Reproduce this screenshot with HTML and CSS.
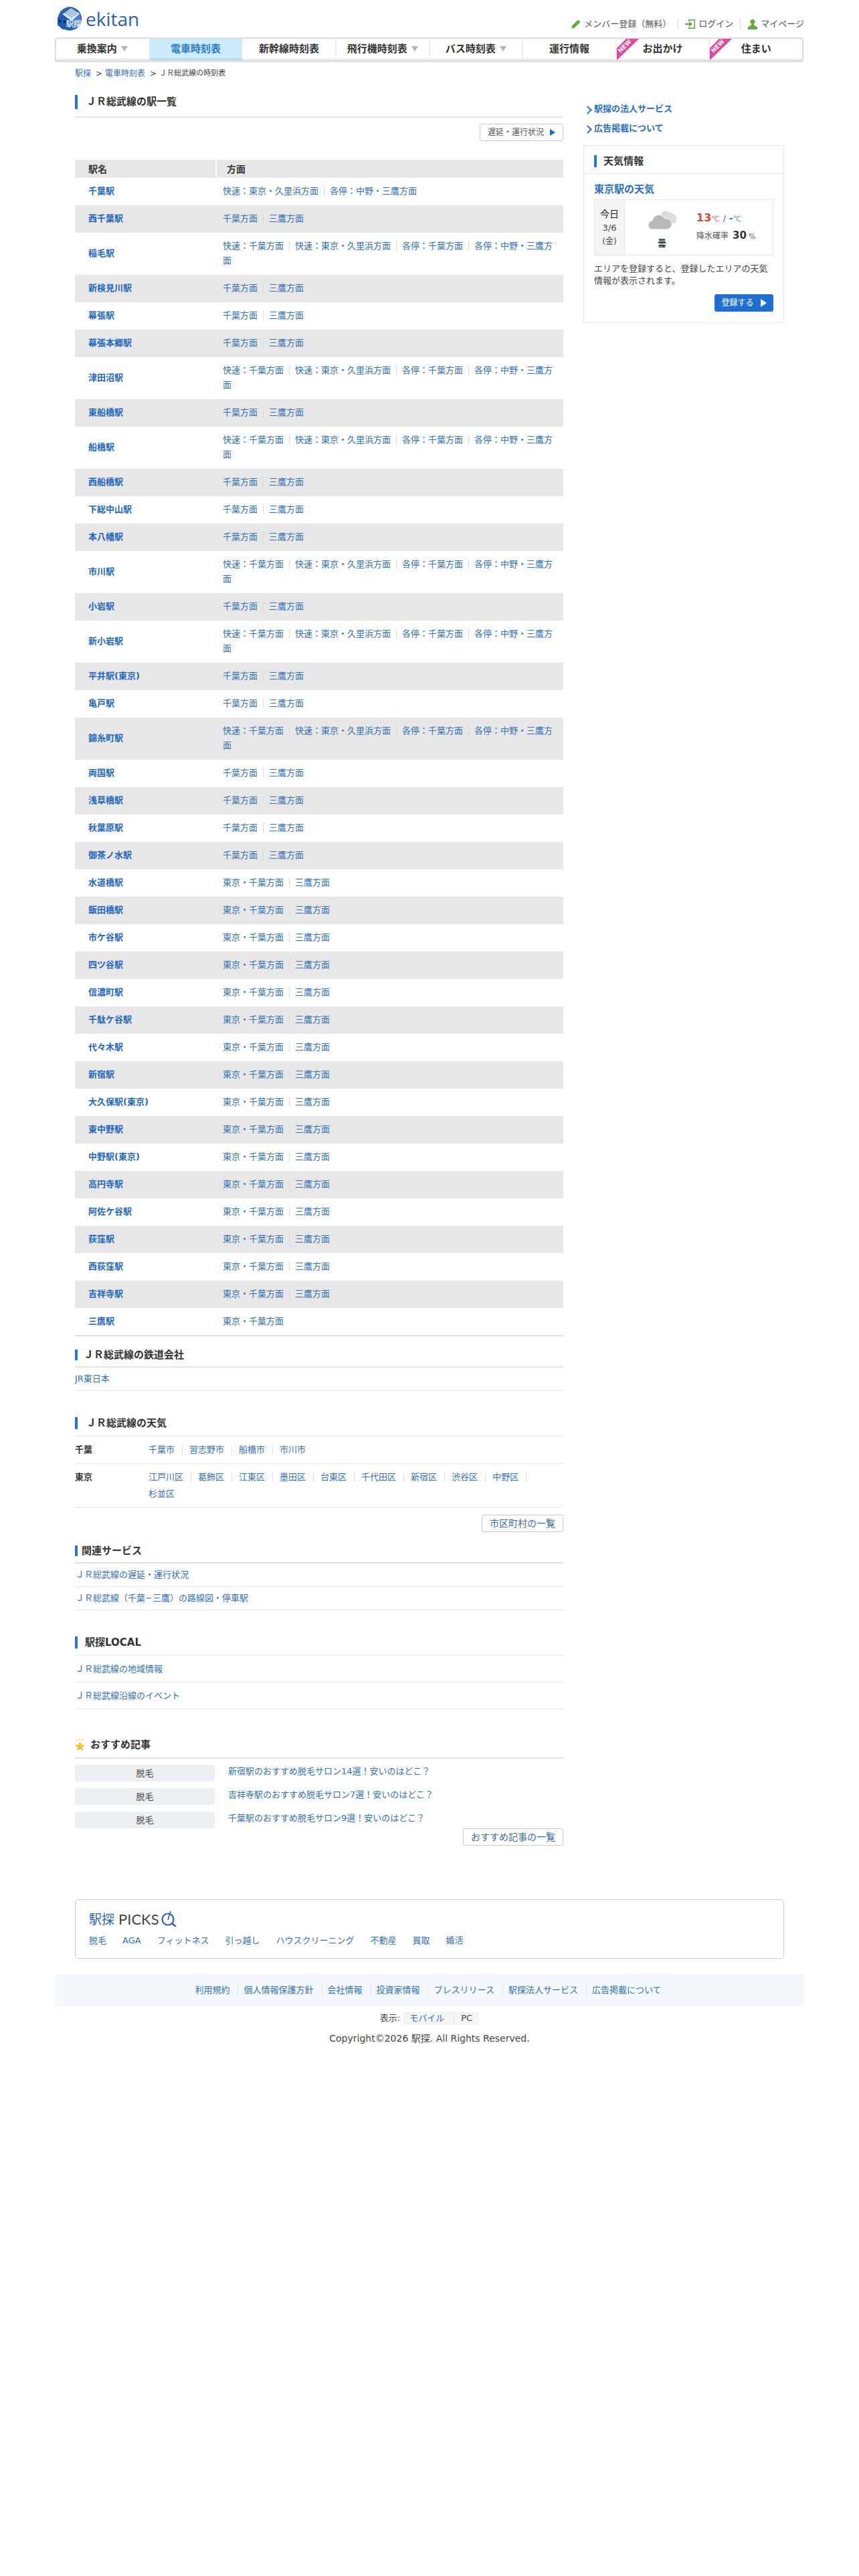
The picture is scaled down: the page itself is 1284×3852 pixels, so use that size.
FILE: index.html
```html
<!DOCTYPE html>
<html lang="ja">
<head>
<meta charset="utf-8">
<title>ＪＲ総武線の時刻表 - 駅探</title>
<link rel="stylesheet" href="styles.css">
</head>
<body>
<div class="wrap">
  <header class="top">
    <a class="logo" href="#">
      <svg class="logo-mark" viewBox="0 0 42 40" width="39" height="38">
        <circle cx="22" cy="20" r="19" fill="#2d62ad"/>
        <polygon points="10,13 24,3 38,12 25,24" fill="#d8e6f5"/>
        <path d="M14 12l13-8M17 14l13-8M20 16l13-8M23 18l11-7" stroke="#5f8cc6" stroke-width="1.2"/>
        <polygon points="2,18 10,13 25,24 27,38 10,37 2,30" fill="#1f5bb0"/>
        <polygon points="25,24 38,12 40,22 27,38" fill="#4c82c8"/>
        <circle cx="6" cy="24" r="2.4" fill="#0d2f63"/><circle cx="14" cy="25" r="2.4" fill="#0d2f63"/>
        <text x="16" y="33" class="logo-kanji">駅探</text>
      </svg>
      <span class="logo-text">ekitan</span>
    </a>
    <nav class="toplinks">
      <a href="#"><svg viewBox="0 0 16 16" width="16" height="16"><path d="M1 15l1.500-5L11 1.500l3.500 3.500L6 13.500z" fill="#62a83b"/></svg>メンバー登録（無料）</a>
      <span class="toplink-sep"></span>
      <a href="#"><svg viewBox="0 0 16 16" width="16" height="16"><path d="M5 1h10v14H5v-3h1.500v1.500h7v-11h-7V4H5z" fill="#62a83b"/><path d="M0 7h6V4l5 4-5 4V9H0z" fill="#62a83b"/></svg>ログイン</a>
      <span class="toplink-sep"></span>
      <a href="#"><svg viewBox="0 0 16 16" width="16" height="16"><circle cx="8" cy="4.500" r="3.500" fill="#62a83b"/><path d="M6 8h4v1.500l5 3V16H1v-3.500l5-3z" fill="#62a83b"/></svg>マイページ</a>
    </nav>
  </header>

  <nav class="gnav">
    <a href="#" class="gnav-item">乗換案内<i class="caret"></i></a>
    <a href="#" class="gnav-item is-active">電車時刻表</a>
    <a href="#" class="gnav-item">新幹線時刻表</a>
    <a href="#" class="gnav-item">飛行機時刻表<i class="caret"></i></a>
    <a href="#" class="gnav-item">バス時刻表<i class="caret"></i></a>
    <a href="#" class="gnav-item">運行情報</a>
    <a href="#" class="gnav-item">
      <svg class="ribbon" viewBox="0 0 33 33" width="33" height="33"><polygon points="14,0 33,0 0,32 0,14" fill="#e0479e"/><text x="0" y="0" class="ribbon-text" transform="translate(5.500 21.500) rotate(-45)">NEW</text></svg>
      お出かけ</a>
    <a href="#" class="gnav-item">
      <svg class="ribbon" viewBox="0 0 33 33" width="33" height="33"><polygon points="14,0 33,0 0,32 0,14" fill="#e0479e"/><text x="0" y="0" class="ribbon-text" transform="translate(5.500 21.500) rotate(-45)">NEW</text></svg>
      住まい</a>
  </nav>

  <div class="crumbs">
    <a href="#">駅探</a><span class="crumb-gt">&gt;</span><a href="#">電車時刻表</a><span class="crumb-gt">&gt;</span><span class="crumb-now">ＪＲ総武線の時刻表</span>
  </div>

  <div class="columns">
    <main class="main">
      <h2 class="sec sec-first"><span class="sec-t sec-t17">ＪＲ総武線の駅一覧</span></h2>
      <div class="btn-row btn-row-first"><a href="#" class="btn btn-small">遅延・運行状況<i class="tri"></i></a></div>

      <table class="stations">
        <thead><tr><th class="th-name">駅名</th><th class="th-dir">方面</th></tr></thead>
        <tbody>
          <tr><td class="name"><a href="#">千葉駅</a></td><td class="dir"><a href="#">快速：東京・久里浜方面</a><span class="sep"></span><a href="#">各停：中野・三鷹方面</a></td></tr>
          <tr><td class="name"><a href="#">西千葉駅</a></td><td class="dir"><a href="#">千葉方面</a><span class="sep"></span><a href="#">三鷹方面</a></td></tr>
          <tr><td class="name"><a href="#">稲毛駅</a></td><td class="dir"><a href="#">快速：千葉方面</a><span class="sep"></span><a href="#">快速：東京・久里浜方面</a><span class="sep"></span><a href="#">各停：千葉方面</a><span class="sep"></span><a href="#">各停：中野・三鷹方面</a></td></tr>
          <tr><td class="name"><a href="#">新検見川駅</a></td><td class="dir"><a href="#">千葉方面</a><span class="sep"></span><a href="#">三鷹方面</a></td></tr>
          <tr><td class="name"><a href="#">幕張駅</a></td><td class="dir"><a href="#">千葉方面</a><span class="sep"></span><a href="#">三鷹方面</a></td></tr>
          <tr><td class="name"><a href="#">幕張本郷駅</a></td><td class="dir"><a href="#">千葉方面</a><span class="sep"></span><a href="#">三鷹方面</a></td></tr>
          <tr><td class="name"><a href="#">津田沼駅</a></td><td class="dir"><a href="#">快速：千葉方面</a><span class="sep"></span><a href="#">快速：東京・久里浜方面</a><span class="sep"></span><a href="#">各停：千葉方面</a><span class="sep"></span><a href="#">各停：中野・三鷹方面</a></td></tr>
          <tr><td class="name"><a href="#">東船橋駅</a></td><td class="dir"><a href="#">千葉方面</a><span class="sep"></span><a href="#">三鷹方面</a></td></tr>
          <tr><td class="name"><a href="#">船橋駅</a></td><td class="dir"><a href="#">快速：千葉方面</a><span class="sep"></span><a href="#">快速：東京・久里浜方面</a><span class="sep"></span><a href="#">各停：千葉方面</a><span class="sep"></span><a href="#">各停：中野・三鷹方面</a></td></tr>
          <tr><td class="name"><a href="#">西船橋駅</a></td><td class="dir"><a href="#">千葉方面</a><span class="sep"></span><a href="#">三鷹方面</a></td></tr>
          <tr><td class="name"><a href="#">下総中山駅</a></td><td class="dir"><a href="#">千葉方面</a><span class="sep"></span><a href="#">三鷹方面</a></td></tr>
          <tr><td class="name"><a href="#">本八幡駅</a></td><td class="dir"><a href="#">千葉方面</a><span class="sep"></span><a href="#">三鷹方面</a></td></tr>
          <tr><td class="name"><a href="#">市川駅</a></td><td class="dir"><a href="#">快速：千葉方面</a><span class="sep"></span><a href="#">快速：東京・久里浜方面</a><span class="sep"></span><a href="#">各停：千葉方面</a><span class="sep"></span><a href="#">各停：中野・三鷹方面</a></td></tr>
          <tr><td class="name"><a href="#">小岩駅</a></td><td class="dir"><a href="#">千葉方面</a><span class="sep"></span><a href="#">三鷹方面</a></td></tr>
          <tr><td class="name"><a href="#">新小岩駅</a></td><td class="dir"><a href="#">快速：千葉方面</a><span class="sep"></span><a href="#">快速：東京・久里浜方面</a><span class="sep"></span><a href="#">各停：千葉方面</a><span class="sep"></span><a href="#">各停：中野・三鷹方面</a></td></tr>
          <tr><td class="name"><a href="#">平井駅(東京)</a></td><td class="dir"><a href="#">千葉方面</a><span class="sep"></span><a href="#">三鷹方面</a></td></tr>
          <tr><td class="name"><a href="#">亀戸駅</a></td><td class="dir"><a href="#">千葉方面</a><span class="sep"></span><a href="#">三鷹方面</a></td></tr>
          <tr><td class="name"><a href="#">錦糸町駅</a></td><td class="dir"><a href="#">快速：千葉方面</a><span class="sep"></span><a href="#">快速：東京・久里浜方面</a><span class="sep"></span><a href="#">各停：千葉方面</a><span class="sep"></span><a href="#">各停：中野・三鷹方面</a></td></tr>
          <tr><td class="name"><a href="#">両国駅</a></td><td class="dir"><a href="#">千葉方面</a><span class="sep"></span><a href="#">三鷹方面</a></td></tr>
          <tr><td class="name"><a href="#">浅草橋駅</a></td><td class="dir"><a href="#">千葉方面</a><span class="sep"></span><a href="#">三鷹方面</a></td></tr>
          <tr><td class="name"><a href="#">秋葉原駅</a></td><td class="dir"><a href="#">千葉方面</a><span class="sep"></span><a href="#">三鷹方面</a></td></tr>
          <tr><td class="name"><a href="#">御茶ノ水駅</a></td><td class="dir"><a href="#">千葉方面</a><span class="sep"></span><a href="#">三鷹方面</a></td></tr>
          <tr><td class="name"><a href="#">水道橋駅</a></td><td class="dir"><a href="#">東京・千葉方面</a><span class="sep"></span><a href="#">三鷹方面</a></td></tr>
          <tr><td class="name"><a href="#">飯田橋駅</a></td><td class="dir"><a href="#">東京・千葉方面</a><span class="sep"></span><a href="#">三鷹方面</a></td></tr>
          <tr><td class="name"><a href="#">市ケ谷駅</a></td><td class="dir"><a href="#">東京・千葉方面</a><span class="sep"></span><a href="#">三鷹方面</a></td></tr>
          <tr><td class="name"><a href="#">四ツ谷駅</a></td><td class="dir"><a href="#">東京・千葉方面</a><span class="sep"></span><a href="#">三鷹方面</a></td></tr>
          <tr><td class="name"><a href="#">信濃町駅</a></td><td class="dir"><a href="#">東京・千葉方面</a><span class="sep"></span><a href="#">三鷹方面</a></td></tr>
          <tr><td class="name"><a href="#">千駄ケ谷駅</a></td><td class="dir"><a href="#">東京・千葉方面</a><span class="sep"></span><a href="#">三鷹方面</a></td></tr>
          <tr><td class="name"><a href="#">代々木駅</a></td><td class="dir"><a href="#">東京・千葉方面</a><span class="sep"></span><a href="#">三鷹方面</a></td></tr>
          <tr><td class="name"><a href="#">新宿駅</a></td><td class="dir"><a href="#">東京・千葉方面</a><span class="sep"></span><a href="#">三鷹方面</a></td></tr>
          <tr><td class="name"><a href="#">大久保駅(東京)</a></td><td class="dir"><a href="#">東京・千葉方面</a><span class="sep"></span><a href="#">三鷹方面</a></td></tr>
          <tr><td class="name"><a href="#">東中野駅</a></td><td class="dir"><a href="#">東京・千葉方面</a><span class="sep"></span><a href="#">三鷹方面</a></td></tr>
          <tr><td class="name"><a href="#">中野駅(東京)</a></td><td class="dir"><a href="#">東京・千葉方面</a><span class="sep"></span><a href="#">三鷹方面</a></td></tr>
          <tr><td class="name"><a href="#">高円寺駅</a></td><td class="dir"><a href="#">東京・千葉方面</a><span class="sep"></span><a href="#">三鷹方面</a></td></tr>
          <tr><td class="name"><a href="#">阿佐ケ谷駅</a></td><td class="dir"><a href="#">東京・千葉方面</a><span class="sep"></span><a href="#">三鷹方面</a></td></tr>
          <tr><td class="name"><a href="#">荻窪駅</a></td><td class="dir"><a href="#">東京・千葉方面</a><span class="sep"></span><a href="#">三鷹方面</a></td></tr>
          <tr><td class="name"><a href="#">西荻窪駅</a></td><td class="dir"><a href="#">東京・千葉方面</a><span class="sep"></span><a href="#">三鷹方面</a></td></tr>
          <tr><td class="name"><a href="#">吉祥寺駅</a></td><td class="dir"><a href="#">東京・千葉方面</a><span class="sep"></span><a href="#">三鷹方面</a></td></tr>
          <tr><td class="name"><a href="#">三鷹駅</a></td><td class="dir"><a href="#">東京・千葉方面</a></td></tr>
        </tbody>
      </table>

      <section class="block-company">
        <h2 class="sec sec-thick sec-16"><span class="sec-t sec-t9">ＪＲ総武線の鉄道会社</span></h2>
        <ul class="rows"><li><a href="#">JR東日本</a></li></ul>
      </section>

      <section class="block-weather">
        <h2 class="sec sec-thin"><span class="sec-t sec-t13">ＪＲ総武線の天気</span></h2>
        <dl class="pref">
          <dt>千葉</dt>
          <dd><a href="#">千葉市</a><a href="#">習志野市</a><a href="#">船橋市</a><a href="#">市川市</a></dd>
        </dl>
        <dl class="pref">
          <dt>東京</dt>
          <dd><a href="#">江戸川区</a><a href="#">葛飾区</a><a href="#">江東区</a><a href="#">墨田区</a><a href="#">台東区</a><a href="#">千代田区</a><a href="#">新宿区</a><a href="#">渋谷区</a><a href="#">中野区</a><a href="#">杉並区</a></dd>
        </dl>
        <div class="btn-row btn-row-city"><a href="#" class="btn">市区町村の一覧</a></div>
      </section>

      <section class="block-related">
        <h2 class="sec sec-thick sec-16"><span class="sec-t sec-t6">関連サービス</span></h2>
        <ul class="rows rows-indent"><li><a href="#">ＪＲ総武線の遅延・運行状況</a></li><li><a href="#">ＪＲ総武線（千葉−三鷹）の路線図・停車駅</a></li></ul>
      </section>

      <section class="block-local">
        <h2 class="sec sec-thin"><span class="sec-t sec-t11">駅探LOCAL</span></h2>
        <ul class="rows rows-indent rows-tall"><li><a href="#">ＪＲ総武線の地域情報</a></li><li><a href="#">ＪＲ総武線沿線のイベント</a></li></ul>
      </section>

      <section class="block-reco">
        <h2 class="sec sec-thick sec-star">
          <svg class="star" viewBox="0 0 15 18" width="15" height="18"><polygon points="7.500,4 9.700,9 15,9.600 11,13 12.200,18 7.500,15.500 2.800,18 4,13 0,9.600 5.300,9" fill="#f6c42b"/><path d="M7.500 0v2.500M3 1.500l1 2M12 1.500l-1 2" stroke="#f6c42b"/></svg>
          <span class="sec-t sec-tstar">おすすめ記事</span>
        </h2>
        <ul class="reco">
          <li><span class="reco-tag">脱毛</span><a href="#">新宿駅のおすすめ脱毛サロン14選！安いのはどこ？</a></li>
          <li><span class="reco-tag">脱毛</span><a href="#">吉祥寺駅のおすすめ脱毛サロン7選！安いのはどこ？</a></li>
          <li><span class="reco-tag">脱毛</span><a href="#">千葉駅のおすすめ脱毛サロン9選！安いのはどこ？</a></li>
        </ul>
        <div class="btn-row"><a href="#" class="btn">おすすめ記事の一覧</a></div>
      </section>
    </main>

    <aside class="side">
      <ul class="side-links">
        <li><a href="#">駅探の法人サービス</a></li>
        <li><a href="#">広告掲載について</a></li>
      </ul>
      <section class="wx">
        <h3 class="wx-h"><span>天気情報</span></h3>
        <div class="wx-body">
          <a href="#" class="wx-title">東京駅の天気</a>
          <div class="wx-card">
            <div class="wx-date"><b>今日</b><span>3/6</span><small>(金)</small></div>
            <div class="wx-icon">
              <svg viewBox="0 0 42 32" width="42" height="32"><path d="M20 8a6 6 0 0 1 11-2 6 6 0 0 1 7 3 5.500 5.500 0 0 1-1 11H24z" fill="#dedede" stroke="#cfcfcf"/><path d="M7 30a6.500 6.500 0 0 1-1-13 10 10 0 0 1 19-3 8 8 0 0 1 4 16z" fill="#b9b9b9" stroke="#fff"/></svg>
              <b>曇</b>
            </div>
            <div class="wx-data">
              <p class="wx-temp"><b class="hot">13</b><small class="hot-u">℃</small><span class="slash">/</span><b class="cold">-</b><small class="cold-u">℃</small></p>
              <p class="wx-rain">降水確率<b>30</b><small>%</small></p>
            </div>
          </div>
          <p class="wx-note">エリアを登録すると、登録したエリアの天気情報が表示されます。</p>
          <div class="wx-action"><a href="#" class="wx-btn">登録する<i class="tri tri-white"></i></a></div>
        </div>
      </section>
    </aside>
  </div>

  <section class="picks">
    <div class="picks-logo"><span class="picks-ja">駅探</span><span class="picks-en">PICKS</span>
      <svg viewBox="0 0 24 23" width="24" height="23"><circle cx="10" cy="12" r="8.500" fill="none" stroke="#2d62ad" stroke-width="2.200"/><path d="M16 18l6 5" stroke="#2d62ad" stroke-width="2.500"/><path d="M10 13l4-13" stroke="#2d62ad" stroke-width="1.600"/></svg>
    </div>
    <div class="picks-links"><a href="#">脱毛</a><a href="#">AGA</a><a href="#">フィットネス</a><a href="#">引っ越し</a><a href="#">ハウスクリーニング</a><a href="#">不動産</a><a href="#">買取</a><a href="#">婚活</a></div>
  </section>

  <footer>
    <nav class="foot-nav"><a href="#">利用規約</a><a href="#">個人情報保護方針</a><a href="#">会社情報</a><a href="#">投資家情報</a><a href="#">プレスリリース</a><a href="#">駅探法人サービス</a><a href="#">広告掲載について</a></nav>
    <div class="view-row"><span>表示:</span><span class="view-chip"><a href="#">モバイル</a><span class="view-pc">PC</span></span></div>
    <p class="copy">Copyright©2026 駅探. All Rights Reserved.</p>
  </footer>
</div>
</body>
</html>
```

FILE: styles.css
```css
* { box-sizing: border-box; }
html, body { margin: 0; padding: 0; }
body {
  background: #fff;
  color: #333;
  font-family: "DejaVu Sans", "Noto Sans CJK JP", sans-serif;
  font-size: 13px;
  line-height: 20px;
}
a { color: #3470b4; text-decoration: none; }
h2, h3, p, ul, dl, dd { margin: 0; padding: 0; }
ul { list-style: none; }

.wrap { width: 1120px; margin: 0 auto; }

/* header */
.top { height: 56px; display: flex; justify-content: space-between; position: relative; }
.logo { display: flex; align-items: center; height: 38px; margin: 9px 0 0 2px; }
.logo-mark { flex: none; }
.logo-kanji { font: bold 12px "Noto Sans CJK JP", sans-serif; fill: #dbe8f7; }
.logo-text { font: 28px/38px "Open Sans", sans-serif; color: #2d62ad; margin-left: 5px; }
.toplinks { display: flex; align-items: center; height: 20px; margin-top: 26px; font-size: 13px; }
.toplinks a { display: flex; align-items: center; color: #555; gap: 4px; }
.toplink-sep { width: 1px; height: 16px; background: #ddd; margin: 0 10px; }

/* global nav */
.gnav {
  display: flex;
  width: 1119px;
  height: 37px;
  border: 2px solid #ddd;
  border-bottom-width: 3px;
  border-radius: 4px;
  background: #fff;
}
.gnav-item {
  flex: 1 1 0;
  position: relative;
  display: flex;
  align-items: center;
  justify-content: center;
  color: #333;
  font-size: 15px;
  font-weight: bold;
  border-right: 2px solid #eee;
  border-bottom: 3px solid #f2f2f2;
}
.gnav-item:last-child { border-right: 0; }
.gnav-item.is-active { background: #cdeaf9; color: #2a78c8; border-bottom-color: #b3dcf2; }
.caret { width: 0; height: 0; margin-left: 6px; border: 5px solid transparent; border-top: 8px solid #b5b5b5; border-bottom: 0; }
.ribbon { position: absolute; left: 0; top: 0; overflow: visible; }
.ribbon-text { font: bold 9px "DejaVu Sans", sans-serif; fill: #fff; }

/* breadcrumb */
.crumbs { height: 34px; padding: 7px 0 0 30px; font-size: 12px; line-height: 20px; display: flex; }
.crumb-gt { margin: 0 4px 0 7px; color: #444; }
.crumb-now { font-size: 11px; color: #444; }

/* columns */
.columns { display: flex; gap: 30px; padding: 0 30px; }
.main { width: 730px; flex: none; }
.side { width: 300px; flex: none; }

/* headings */
.sec { display: flex; align-items: center; font-size: 15px; line-height: 18px; font-weight: bold; color: #333; }
.sec-t { display: block; border-left: 4px solid #2b73cd; }
.sec-first { padding: 15px 0 11px; border-bottom: 2px solid #e4e4e4; }
.sec-first .sec-t { line-height: 21px; }
.sec-thick { padding-bottom: 9px; border-bottom: 2px solid #e2e2e2; }
.sec-thin { padding-bottom: 10px; border-bottom: 1px solid #e6e6e6; }
.sec-16 .sec-t { line-height: 16px; }
.sec-t17 { padding-left: 13px; }
.sec-t9 { padding-left: 9px; }
.sec-t13 { padding-left: 13px; }
.sec-t6 { padding-left: 6px; }
.sec-t11 { padding-left: 11px; }
.sec-star { padding-bottom: 10px; }
.star { flex: none; }
.sec-tstar { border-left: 0; padding-left: 8px; }

/* buttons */
.btn-row { display: flex; justify-content: flex-end; }
.btn-row-first { margin-top: 9px; }
.btn-row-city { margin-top: 10px; }
.btn {
  display: flex;
  align-items: center;
  height: 26px;
  padding: 0 11px;
  border: 1px solid #c9c9c9;
  border-radius: 3px;
  background: #fff;
  font-size: 14px;
  color: #3a6ea8;
}
.btn-small { font-size: 12px; color: #555; padding: 0 11px; }
.tri { display: inline-block; width: 0; height: 0; margin-left: 9px; border: 5px solid transparent; border-left: 8px solid #2167c0; border-right: 0; }
.tri-white { border-left-color: #fff; border-top-width: 6px; border-bottom-width: 6px; border-left-width: 9px; margin-left: 10px; }

/* station table */
.stations { width: 730px; margin-top: 28px; border-collapse: separate; border-spacing: 0; table-layout: fixed; border-bottom: 1px solid #ccc; }
.stations th { height: 27px; padding: 0; background: #e7e7e7; text-align: left; font-size: 14px; color: #333; }
.stations .th-name { width: 210px; padding-left: 20px; }
.stations .th-dir { padding-left: 15px; border-left: 2px solid #fff; }
.stations td { padding: 9px 0 10px; line-height: 22px; vertical-align: middle; }
.stations tbody tr:nth-child(even) td { background: #e7e7e7; }
.stations .name { padding-left: 20px; font-weight: bold; }
.name a { color: #1f66bd; }
.stations .dir { padding-left: 11px; padding-right: 8px; }
.sep { display: inline-block; width: 1px; height: 15px; margin: 0 8px; background: #d9d9d9; vertical-align: -3px; }

/* simple rows */
.block-company { margin-top: 20px; }
.rows li { height: 35px; line-height: 34px; border-bottom: 1px solid #e6e6e6; }
.rows-indent li { padding-left: 1px; }
.rows-tall li { height: 40px; line-height: 39px; }

/* weather */
.block-weather { margin-top: 39px; }
.pref { display: flex; border-bottom: 1px solid #e6e6e6; padding: 7px 0 8px; line-height: 25px; }
.pref dt { width: 110px; flex: none; font-weight: bold; color: #333; }
.pref dd { width: 610px; }
.pref dd a { display: inline-block; line-height: 14px; padding-right: 11px; margin-right: 10px; border-right: 1px solid #ddd; }
.pref dd a:last-child { border-right: 0; }

.block-related { margin-top: 20px; }
.block-local { margin-top: 39px; }
.block-reco { margin-top: 44px; }

.reco { margin-top: 9px; }
.reco li { display: flex; gap: 20px; height: 25px; margin-bottom: 10px; }
.reco li:last-child { margin-bottom: 0; }
.reco-tag { width: 209px; height: 25px; flex: none; background: #edf0f2; border-radius: 3px; text-align: center; line-height: 25px; color: #444; }

/* sidebar */
.side-links { padding-top: 26px; }
.side-links li { position: relative; height: 20px; margin-bottom: 9px; padding-left: 16px; font-weight: bold; }
.side-links li::before {
  content: "";
  position: absolute;
  left: 2px;
  top: 7px;
  width: 7px;
  height: 7px;
  border-top: 2px solid #2b6fbe;
  border-right: 2px solid #2b6fbe;
  transform: rotate(45deg);
}
.side-links a { color: #2b6fbe; }
.wx { margin-top: 15px; height: 266px; border: 1px solid #e4e4e4; }
.wx-h { height: 42px; padding: 14px 0 0 15px; border-bottom: 1px solid #e4e4e4; font-size: 15px; line-height: 18px; color: #333; }
.wx-h span { display: block; border-left: 4px solid #2b73cd; padding-left: 10px; }
.wx-body { padding: 13px 15px 0; }
.wx-title { display: block; font-size: 15px; font-weight: bold; color: #2b6fbe; }
.wx-card { display: flex; width: 268px; height: 84px; margin-top: 5px; border: 1px solid #e4e4e4; }
.wx-date { width: 45px; flex: none; display: flex; flex-direction: column; align-items: center; background: #f5f5f5; border-right: 1px solid #e4e4e4; padding-top: 11px; color: #444; }
.wx-date b { font-size: 14px; font-weight: normal; color: #222; line-height: 20px; }
.wx-date span { line-height: 22px; }
.wx-date small { font-size: 12px; line-height: 18px; }
.wx-icon { width: 107px; flex: none; display: flex; flex-direction: column; align-items: center; padding: 14px 0 0 4px; }
.wx-icon svg { display: block; }
.wx-icon b { font-size: 13px; margin-top: 11px; line-height: 16px; color: #333; }
.wx-data { flex: 1; padding-top: 16px; }
.wx-temp { font-size: 12px; line-height: 22px; height: 24px; white-space: nowrap; }
.hot { font-size: 16px; color: #d9432f; }
.hot-u { font-size: 11px; color: #e0705f; }
.slash { margin: 0 5px; color: #555; }
.cold { font-size: 14px; color: #2b6fbe; }
.cold-u { font-size: 11px; color: #5f93cf; }
.wx-rain { font-size: 12px; line-height: 22px; margin-top: 2px; color: #555; white-space: nowrap; }
.wx-rain b { font-size: 15px; margin: 0 3px 0 6px; color: #333; }
.wx-rain small { font-size: 11px; }
.wx-note { margin-top: 11px; line-height: 18px; color: #444; }
.wx-action { display: flex; justify-content: flex-end; margin-top: 11px; }
.wx-btn { display: flex; align-items: center; justify-content: center; width: 88px; height: 26px; background: #1f6fd2; border-radius: 3px; color: #fff; font-size: 12px; }

/* picks */
.picks { width: 1060px; height: 89px; margin: 80px 0 0 30px; padding: 17px 0 0 20px; border: 1px solid #ccc; border-radius: 5px; }
.picks-logo { display: flex; align-items: center; height: 23px; }
.picks-ja { font-size: 19px; color: #2d62ad; }
.picks-en { font: 22px "Lato", sans-serif; color: #444; margin: 0 3px 0 6px; }
.picks-links { display: flex; gap: 24px; margin-top: 11px; }

/* footer */
.foot-nav { display: flex; justify-content: center; align-items: center; height: 47px; margin-top: 23px; background: #f4f9fd; }
.foot-nav a { padding: 0 12px 0 8px; line-height: 16px; border-left: 1px solid #dbe3ea; }
.foot-nav a:first-child { border-left: 0; }
.view-row { display: flex; justify-content: center; align-items: center; height: 20px; margin-top: 9px; color: #444; gap: 4px; }
.view-chip { display: flex; align-items: center; height: 20px; background: #f5f5f5; padding: 0 10px; }
.view-chip a { padding-right: 14px; border-right: 1px solid #ddd; line-height: 14px; }
.view-pc { padding-left: 10px; }
.copy { text-align: center; margin-top: 10px; color: #444; font-size: 14px; }
```
